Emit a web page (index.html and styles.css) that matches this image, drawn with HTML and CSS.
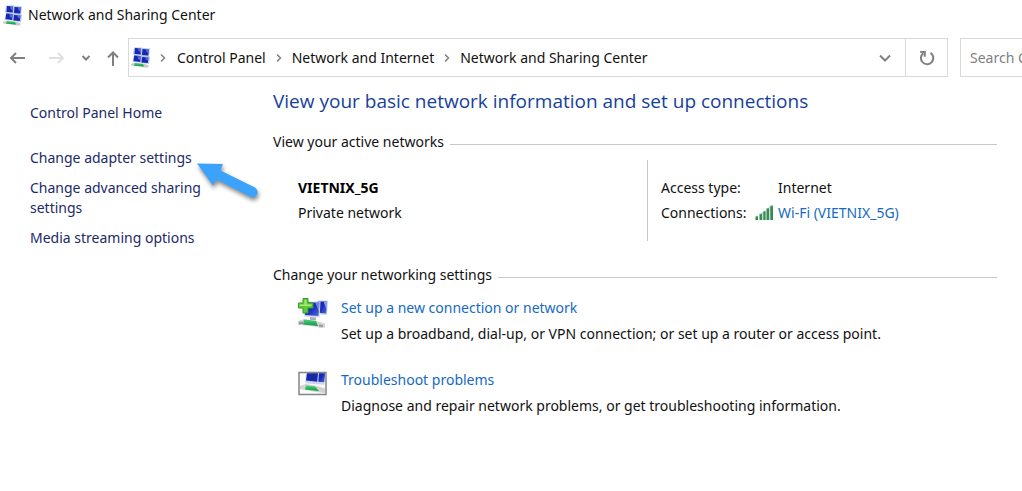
FILE: index.html
```html
<!DOCTYPE html>
<html lang="en">
<head>
<meta charset="utf-8">
<title>Network and Sharing Center</title>
<link rel="stylesheet" href="styles.css">
</head>
<body>
<svg class="defs" aria-hidden="true">
  <defs>
    <linearGradient id="screen" x1="0" y1="0" x2="1" y2="1">
      <stop offset="0" stop-color="#0c1c9c"/>
      <stop offset=".5" stop-color="#1a30c0"/>
      <stop offset="1" stop-color="#5470d8"/>
    </linearGradient>
    <linearGradient id="pipe" x1="0" y1="0" x2="0" y2="1">
      <stop offset="0" stop-color="#4fd07c"/>
      <stop offset="1" stop-color="#0b9a3c"/>
    </linearGradient>
    <symbol id="net" viewBox="0 0 20 21">
      <path d="M3 .5h8v7.500l-9-.5z M11 1l8 .5-1 8-8-.5z M3 8l8 .5-.5 7L1.500 15z M11 9l8 .5-1 7.500-8-1z" fill="#b9c3e2"/>
      <path d="M4 1l6 .5-.3 6L3.500 7z M11.500 2l6.500 .5-.8 6-6.200-.5z M3.200 8.500l6.500 .5-.5 6-6.700-1z M11 10l6.500 .5-.7 5.500-6.300-.5z" fill="#1428b4"/>
      <path d="M7 1.200l3 .3-.2 4L7.500 4z M15 2.200l3 .3-.6 4-2.200-2z M6.500 9l3 .3-.3 3.700L7 12z M14.500 10.300l3 .3-.4 3-2.400-1z" fill="#7f97ea" opacity=".6"/>
      <path d="M0 17l4-1.500 10 1.500 4 1.500-1 2-4 0-7-1.500-6-.5z" fill="#c8ccc9"/>
      <path d="M4 16l8 1 1 2.500L3 18.700z" fill="url(#pipe)"/>
    </symbol>
  </defs>
</svg>

<header class="titlebar">
  <svg class="app-icon"><use href="#net"/></svg>
  <span>Network and Sharing Center</span>
</header>

<div class="toolbar">
  <div class="history">
    <button type="button" aria-label="Back"><svg width="18" height="16" viewBox="0 0 18 16"><path d="M16 8H2M7 3L2 8l5 5"/></svg></button>
    <button type="button" class="off" aria-label="Forward" disabled><svg width="18" height="16" viewBox="0 0 18 16"><path d="M1 8h14M10 3l5 5-5 5"/></svg></button>
    <button type="button" class="recent" aria-label="Recent locations"><svg width="10" height="8" viewBox="0 0 10 8"><path d="M1.500 2L5 5.500 8.500 2"/></svg></button>
    <button type="button" class="up" aria-label="Up"><svg width="14" height="16" viewBox="0 0 14 16"><path d="M7 16V2.500M2 7.500l5-5 5 5"/></svg></button>
  </div>
  <nav class="address" aria-label="Location">
    <svg class="app-icon"><use href="#net"/></svg>
    <svg class="chevron" viewBox="0 0 8 10"><path d="M1 1.500L4.500 5 1 8.500"/></svg>
    <a href="#cp">Control Panel</a>
    <svg class="chevron" viewBox="0 0 8 10"><path d="M2 1.500L5.500 5 2 8.500"/></svg>
    <a href="#ni">Network and Internet</a>
    <svg class="chevron" viewBox="0 0 8 10"><path d="M2 1.500L5.500 5 2 8.500"/></svg>
    <a href="#nsc">Network and Sharing Center</a>
    <button type="button" class="previous" aria-label="Previous locations"><svg width="14" height="10" viewBox="0 0 14 10"><path d="M2 2.500L7 7.500 12 2.500"/></svg></button>
    <button type="button" class="refresh" aria-label="Refresh"><svg width="16" height="16" viewBox="0 0 16 16"><path d="M11.500 2.800A6.200 6.200 0 1 1 4.200 3.200M1.200 2h4.600v4.800"/></svg></button>
  </nav>
  <input class="search" type="text" placeholder="Search Control Panel" aria-label="Search Control Panel">
</div>

<div class="page">
  <nav class="sidebar" aria-label="Tasks">
    <a class="home" href="#home">Control Panel Home</a>
    <div class="task">
      <a href="#adapter">Change adapter settings</a>
      <svg class="pointer" width="68" height="48" viewBox="0 0 68 48" aria-hidden="true"><path d="M2 7.500L28 8 25.500 14.500 60 31.500Q64 35 62 38.500 60 42 56 41L21.500 23.500 18 29.500Z"/></svg>
    </div>
    <a href="#sharing">Change advanced sharing settings</a>
    <a href="#media">Media streaming options</a>
  </nav>

  <main class="content">
    <h1>View your basic network information and set up connections</h1>

    <h2>View your active networks</h2>
    <section class="network">
      <div class="identity">
        <strong>VIETNIX_5G</strong>
        <span>Private network</span>
      </div>
      <dl class="details">
        <dt>Access type:</dt>
        <dd>Internet</dd>
        <dt>Connections:</dt>
        <dd>
          <svg class="signal" width="18" height="16" viewBox="0 0 18 16" aria-hidden="true">
            <path d="M0 11.500l3-1V15H0z M4 9l3-1v7H4z M7.500 6.500l3-1V15h-3z M11 3.500l3-1V15h-3z M14.500 1l3.500-1v15h-3.500z" fill="#8fc49c"/>
            <path d="M1 12l2-.7V15H1z M5 9.500L7 9v6H5z M8.500 7l2-.7V15h-2z M12 4l2-.7V15h-2z M15.500 1.500L18 1v14h-2.500z" fill="#3a8a55"/>
          </svg>
          <a href="#wifi">Wi-Fi (VIETNIX_5G)</a>
        </dd>
      </dl>
    </section>

    <h2>Change your networking settings</h2>
    <ul class="actions">
      <li>
        <svg class="action-icon" width="30" height="32" viewBox="0 0 30 32" aria-hidden="true">
          <path d="M19 2.500h11l-1 14.500-10-1z" fill="#cbd3e4"/>
          <path d="M20 3.500h9l-.8 12-8.200-.8z" fill="url(#screen)"/>
          <path d="M25.500 3.500H29l-.5 8z" fill="#a9b9ee" opacity=".8"/>
          <path d="M7 3.500h15.500L21.500 19.500 6 18.500z" fill="#d4daeb"/>
          <path d="M8 4.500h13.500l-1 13.500L7 17z" fill="url(#screen)"/>
          <path d="M17 4.500h4.500l-.5 9z" fill="#93a7ec" opacity=".7"/>
          <path d="M12 19l6 .5v3l-6-.5z" fill="#aab1b7"/>
          <path d="M0 23l6-2 12 2 9 2.500v4l-4 .5-9-2-14-1z" fill="#d2d5d3"/>
          <path d="M6 21.500l12 1.500 2 5-15-1.500z" fill="url(#pipe)"/>
          <path d="M1 24l4-.5v2.500l-4 .5z M21 26.500l4 .5v2l-4-.5z" fill="#92999a"/>
          <path d="M5 .5h5v4.500h5v5h-5v5H5v-5H.5V5H5z" fill="#5cca36" stroke="#359c25"/>
          <path d="M6.500 2h2v4.500h5v1.500h-12V6.500h5z" fill="#a7eb75"/>
        </svg>
        <div>
          <a href="#setup">Set up a new connection or network</a>
          <p>Set up a broadband, dial-up, or VPN connection; or set up a router or access point.</p>
        </div>
      </li>
      <li>
        <svg class="action-icon" width="30" height="32" viewBox="0 0 30 32" aria-hidden="true">
          <path d="M1 2.500h27v22H1z" fill="#fafafa" stroke="#858585" stroke-width="1.500"/>
          <path d="M8 3.300h19.300l-1 11.500-8-.5-11-1z" fill="#cdd5ea"/>
          <path d="M9 3.300h11l-.8 8.500L8 10.500z" fill="#1428a8"/>
          <path d="M21 3.300h6l-.7 9-6-.5z" fill="url(#screen)"/>
          <path d="M2 16l6-2 11 2 8 2.500V23l-9-1-16-3z" fill="#cfd3d2"/>
          <path d="M8 15.500l9 1 4 4.500-14-1.500z" fill="url(#pipe)"/>
        </svg>
        <div>
          <a href="#troubleshoot">Troubleshoot problems</a>
          <p>Diagnose and repair network problems, or get troubleshooting information.</p>
        </div>
      </li>
    </ul>
  </main>
</div>
</body>
</html>
```
FILE: styles.css
```css
* { box-sizing: border-box; }

body {
  margin: 0;
  background: #fff;
  color: #111;
  font: 14px/20px "Noto Sans", "Open Sans", sans-serif;
  overflow-x: hidden;
}

a { color: inherit; text-decoration: none; }
a:hover { text-decoration: underline; }

button {
  display: flex;
  align-items: center;
  justify-content: center;
  padding: 0;
  border: 0;
  background: none;
}

button path, .chevron path {
  fill: none;
  stroke: #808080;
  stroke-width: 2;
}

.defs { position: absolute; width: 0; height: 0; }
.app-icon { flex: none; width: 20px; height: 21px; }

.titlebar {
  display: flex;
  align-items: center;
  gap: 5px;
  height: 30px;
  padding-left: 3px;
}

.toolbar {
  display: flex;
  height: 39px;
  margin-top: 8px;
}

.history {
  display: flex;
  align-items: center;
  flex: none;
  width: 128px;
  padding-left: 9px;
  gap: 21px;
}
.history .off path { stroke: #e0e0e0; }
.history .recent, .history .up { margin-left: -6px; }

.address {
  display: flex;
  align-items: center;
  flex: 1;
  border: 1px solid #d9d9d9;
  padding-left: 2px;
}
.chevron { width: 8px; height: 10px; margin: 0 9px; }
.chevron path { stroke-width: 1.500; }
.previous { width: 40px; align-self: stretch; margin-left: auto; }
.refresh { width: 42px; align-self: stretch; border-left: 1px solid #d9d9d9; }

.search {
  flex: none;
  width: 62px;
  margin-left: 12px;
  padding: 0 0 0 9px;
  border: 1px solid #d9d9d9;
  border-right: 0;
  border-radius: 0;
  font: inherit;
}
.search::placeholder { color: #808080; opacity: 1; }

.page {
  display: grid;
  grid-template-columns: 180px 1fr;
  column-gap: 63px;
  padding: 12px 25px 0 30px;
}

.sidebar {
  display: flex;
  flex-direction: column;
  gap: 10px;
  padding-top: 14px;
  color: #1c2a68;
}
.home { margin-bottom: 15px; }
.task { position: relative; }

/* Callout arrow laid over the page beside its link */
.pointer { position: absolute; left: 165px; top: 8px; }
.pointer path { fill: #3ba3fb; filter: drop-shadow(1px 3px 2px #0007); }

h1, h2, p, dl, dd, ul { margin: 0; padding: 0; }

h1 {
  color: #163f9c;
  font-family: "Open Sans", "Noto Sans", sans-serif;
  font-size: 19px;
  font-weight: 400;
  line-height: 24px;
}

h2 {
  display: flex;
  align-items: center;
  gap: 6px;
  font-size: 14px;
  font-weight: 400;
  line-height: 20px;
}
h2::after { content: ""; flex: 1; height: 1px; margin-top: 4px; background: #c8c8c8; }
h1 + h2 { margin-top: 19px; }

.network {
  display: grid;
  grid-template-columns: 349px 1fr;
  margin: 8px 0 24px 25px;
}
.identity, .details { padding: 18px 0; row-gap: 5px; }
.identity { display: flex; flex-direction: column; }
.identity strong { color: #000; }
.details {
  display: grid;
  grid-template-columns: 94px 1fr;
  align-content: start;
  padding-left: 13px;
  border-left: 1px solid #c8c8c8;
}
.details dd { display: flex; align-items: center; gap: 5px; }
.details dd:first-of-type { padding-left: 23px; }
.details a, .actions a { color: #166ac2; }

.actions {
  display: flex;
  flex-direction: column;
  gap: 26px;
  margin: 13px 0 0 25px;
  list-style: none;
}
.actions li { display: flex; gap: 13px; }
.actions p { margin-top: 6px; }
.action-icon { flex: none; }
```
